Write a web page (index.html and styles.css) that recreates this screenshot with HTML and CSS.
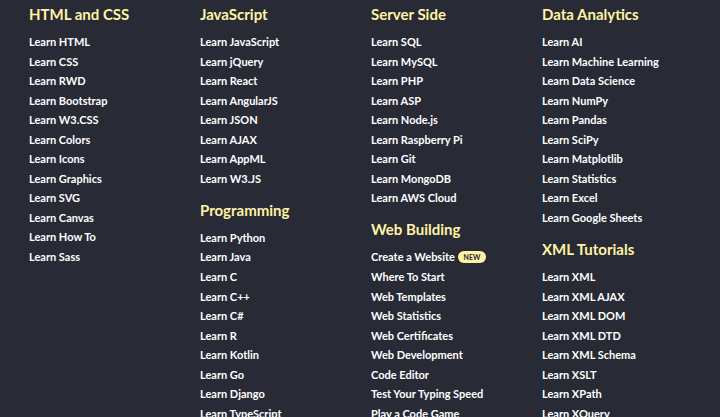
FILE: index.html
```html
<!DOCTYPE html>
<html>
  <head>
    <meta charset="UTF-8" />
    <link rel="stylesheet" href="styles.css">
  </head>

  <body>
    <div class="menu-container">
      <div class="menu-column">
        <div class="menu-section">
          <h3>HTML and CSS</h3>
          <a href="#">Learn HTML</a>
          <a href="#">Learn CSS</a>
          <a href="#">Learn RWD</a>
          <a href="#">Learn Bootstrap</a>
          <a href="#">Learn W3.CSS</a>
          <a href="#">Learn Colors</a>
          <a href="#">Learn Icons</a>
          <a href="#">Learn Graphics</a>
          <a href="#">Learn SVG</a>
          <a href="#">Learn Canvas</a>
          <a href="#">Learn How To</a>
          <a href="#">Learn Sass</a>
        </div>
      </div>

      <div class="menu-column">
        <div class="menu-section">
          <h3>JavaScript</h3>
          <a href="#">Learn JavaScript</a>
          <a href="#">Learn jQuery</a>
          <a href="#">Learn React</a>
          <a href="#">Learn AngularJS</a>
          <a href="#">Learn JSON</a>
          <a href="#">Learn AJAX</a>
          <a href="#">Learn AppML</a>
          <a href="#">Learn W3.JS</a>
        </div>
        <div class="menu-section">
          <h3>Programming</h3>
          <a href="#">Learn Python</a>
          <a href="#">Learn Java</a>
          <a href="#">Learn C</a>
          <a href="#">Learn C++</a>
          <a href="#">Learn C#</a>
          <a href="#">Learn R</a>
          <a href="#">Learn Kotlin</a>
          <a href="#">Learn Go</a>
          <a href="#">Learn Django</a>
          <a href="#">Learn TypeScript</a>
        </div>
      </div>

      <div class="menu-column">
        <div class="menu-section">
          <h3>Server Side</h3>
          <a href="#">Learn SQL</a>
          <a href="#">Learn MySQL</a>
          <a href="#">Learn PHP</a>
          <a href="#">Learn ASP</a>
          <a href="#">Learn Node.js</a>
          <a href="#">Learn Raspberry Pi</a>
          <a href="#">Learn Git</a>
          <a href="#">Learn MongoDB</a>
          <a href="#">Learn AWS Cloud</a>
        </div>
        <div class="menu-section">
          <h3>Web Building</h3>
          <a href="#">Create a Website <span class="badge">NEW</span></a>
          <a href="#">Where To Start</a>
          <a href="#">Web Templates</a>
          <a href="#">Web Statistics</a>
          <a href="#">Web Certificates</a>
          <a href="#">Web Development</a>
          <a href="#">Code Editor</a>
          <a href="#">Test Your Typing Speed</a>
          <a href="#">Play a Code Game</a>
        </div>
      </div>

      <div class="menu-column">
        <div class="menu-section">
          <h3>Data Analytics</h3>
          <a href="#">Learn AI</a>
          <a href="#">Learn Machine Learning</a>
          <a href="#">Learn Data Science</a>
          <a href="#">Learn NumPy</a>
          <a href="#">Learn Pandas</a>
          <a href="#">Learn SciPy</a>
          <a href="#">Learn Matplotlib</a>
          <a href="#">Learn Statistics</a>
          <a href="#">Learn Excel</a>
          <a href="#">Learn Google Sheets</a>
        </div>
        <div class="menu-section">
          <h3>XML Tutorials</h3>
          <a href="#">Learn XML</a>
          <a href="#">Learn XML AJAX</a>
          <a href="#">Learn XML DOM</a>
          <a href="#">Learn XML DTD</a>
          <a href="#">Learn XML Schema</a>
          <a href="#">Learn XSLT</a>
          <a href="#">Learn XPath</a>
          <a href="#">Learn XQuery</a>
        </div>
      </div>
    </div>
  </body>
</html>
```

FILE: styles.css
```css
html,
body {
  margin: 0;
  background: #282a35;
  height: 100%;
  overflow: hidden;
}

.menu-container {
  display: grid;
  grid-template-columns: repeat(4, 171px);
  padding-left: 29px;
  font-family: Lato, 'Liberation Sans', sans-serif;
}

.menu-section + .menu-section {
  margin-top: 7.5px;
}

.menu-section h3 {
  margin: 0 0 4px;
  font-size: 15px;
  line-height: 28px;
  font-weight: 700;
  color: #fff4a3;
}

.menu-section a {
  display: block;
  font-size: 11px;
  line-height: 19.55px;
  font-weight: 700;
  color: #ffffff;
  text-decoration: none;
  white-space: nowrap;
}

.badge {
  display: inline-block;
  padding: 0 6px;
  border-radius: 6px;
  background: #fff4a3;
  color: #282a35;
  font-size: 7px;
  line-height: 12px;
  vertical-align: 1px;
}
```
